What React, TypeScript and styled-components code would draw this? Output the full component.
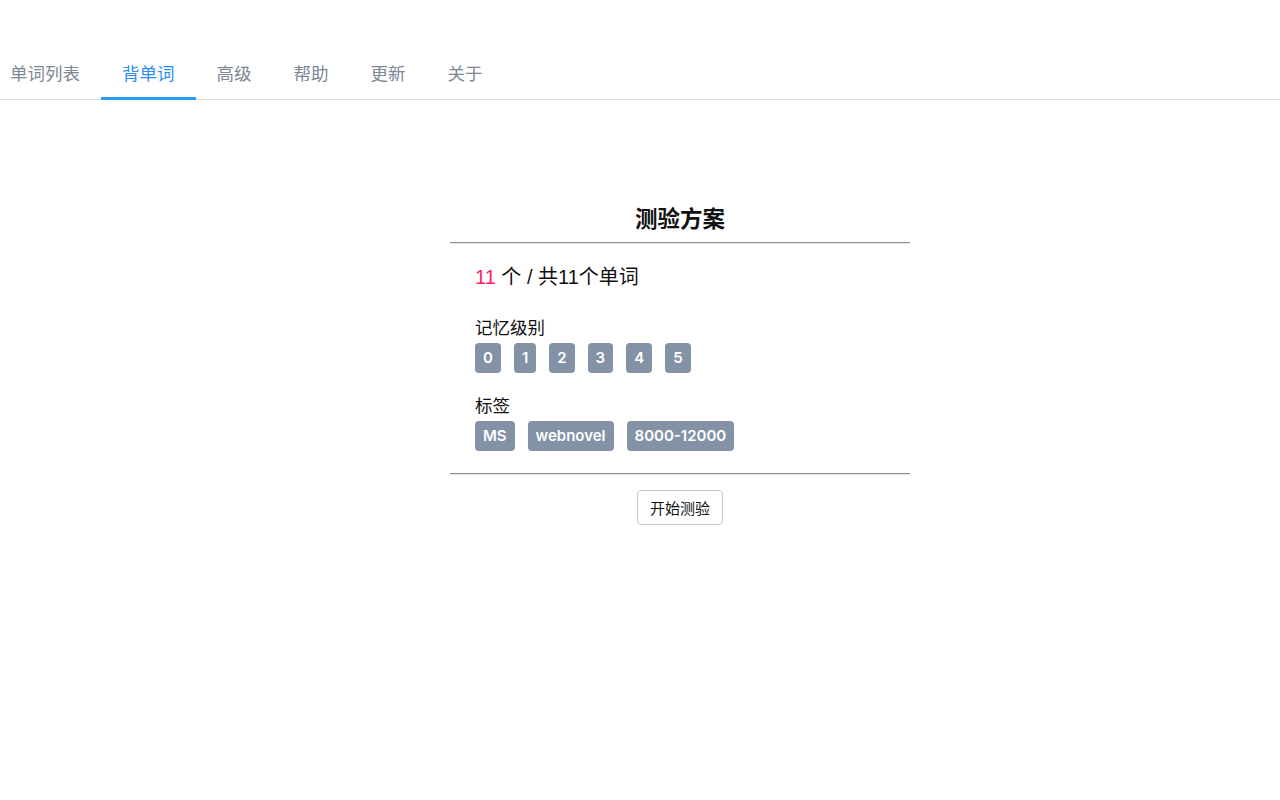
import React from 'react';
import styled, { createGlobalStyle } from 'styled-components';

const GlobalStyle = createGlobalStyle`
  body {
    margin: 0;
    background: #fff;
    font-family: "Liberation Sans", "Noto Sans CJK SC", sans-serif;
    color: #111;
  }
`;

const tabs = ['单词列表', '背单词', '高级', '帮助', '更新', '关于'];
const levels = ['0', '1', '2', '3', '4', '5'];
const tags = ['MS', 'webnovel', '8000-12000'];

const App: React.FC = () => {
  return (
    <>
      <GlobalStyle />
      <NavBar>
        {tabs.map((tab, i) => (
          <Tab key={tab} active={i === 1} first={i === 0}>
            {tab}
          </Tab>
        ))}
      </NavBar>
      <Main>
        <Card>
          <Title>测验方案</Title>
          <Divider />
          <CardBody>
            <Count>
              <Highlight>11</Highlight> 个 / 共11个单词
            </Count>
            <Section>
              <Label>记忆级别</Label>
              <BadgeRow>
                {levels.map((level) => (
                  <Badge key={level}>{level}</Badge>
                ))}
              </BadgeRow>
            </Section>
            <Section>
              <Label>标签</Label>
              <BadgeRow>
                {tags.map((tag) => (
                  <Badge key={tag}>{tag}</Badge>
                ))}
              </BadgeRow>
            </Section>
          </CardBody>
          <Divider />
          <Footer>
            <StartButton>开始测验</StartButton>
          </Footer>
        </Card>
      </Main>
    </>
  );
};

const NavBar = styled.div`
  margin-top: 49px;
  display: flex;
  border-bottom: 1px solid #dcdee2;
`;

const Tab = styled.div<{ active?: boolean; first?: boolean }>`
  height: 48px;
  line-height: 47px;
  padding: 0 21px 0 ${(p) => (p.first ? '10px' : '21px')};
  margin-bottom: -1px;
  font-family: "Noto Sans CJK SC", sans-serif;
  font-size: 17.5px;
  color: ${(p) => (p.active ? '#2d8cf0' : '#7d8796')};
  border-bottom: 3px solid ${(p) => (p.active ? '#2d9cf0' : 'transparent')};
  cursor: pointer;
`;

const Main = styled.div`
  display: flex;
  justify-content: center;
  padding: 101px 0 0 80px;
`;

const Card = styled.div`
  width: 460px;
`;

const Title = styled.div`
  text-align: center;
  font-family: "Noto Sans CJK SC", sans-serif;
  font-size: 22.5px;
  font-weight: 700;
  line-height: 32px;
  margin-bottom: 9px;
`;

const Divider = styled.div`
  border-top: 1px solid #8f8f8f;
  border-bottom: 1px solid #e4e4e4;
`;

const CardBody = styled.div`
  padding: 19px 25px 22px;
`;

const Count = styled.div`
  font-family: "Liberation Sans", "Noto Sans CJK SC", sans-serif;
  font-size: 20px;
  line-height: 28px;
  margin-bottom: 24px;
`;

const Highlight = styled.span`
  color: #ff1f5f;
`;

const Section = styled.div`
  & + & {
    margin-top: 20px;
  }
`;

const Label = styled.div`
  font-family: "Noto Sans CJK SC", sans-serif;
  font-size: 17.5px;
  line-height: 24px;
  margin-bottom: 4px;
`;

const BadgeRow = styled.div`
  display: flex;
  gap: 13px;
`;

const Badge = styled.span`
  height: 30px;
  line-height: 30px;
  padding: 0 8px;
  border-radius: 4px;
  background: #8492a6;
  color: #fff;
  font-family: Inter, "Liberation Sans", sans-serif;
  font-weight: 600;
  font-size: 15px;
`;

const Footer = styled.div`
  display: flex;
  justify-content: center;
  padding-top: 15px;
`;

const StartButton = styled.button`
  height: 35px;
  padding: 0 12px;
  border: 1px solid #c8c8c8;
  border-radius: 4px;
  background: #fff;
  font-family: "Noto Sans CJK SC", sans-serif;
  font-size: 15px;
  color: #111;
  cursor: pointer;
`;

export default App;
